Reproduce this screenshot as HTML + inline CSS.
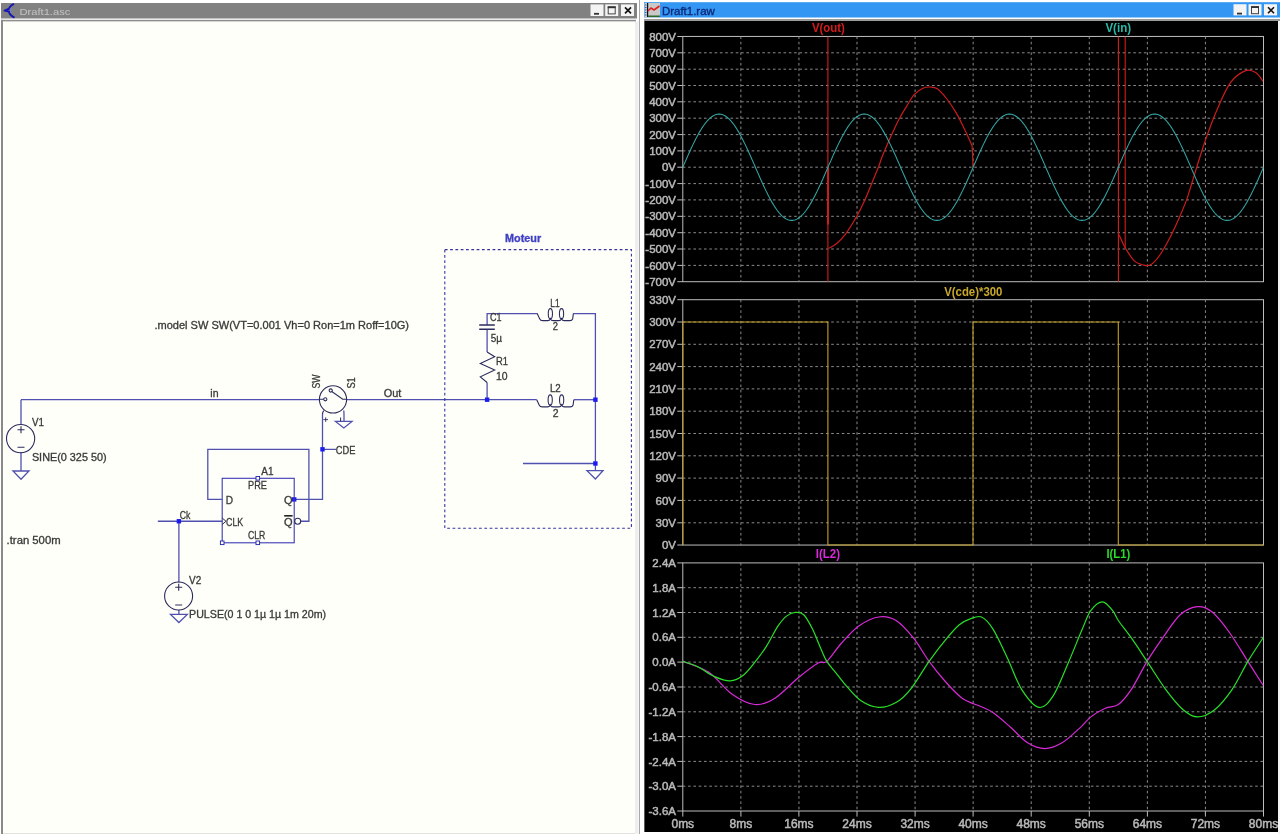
<!DOCTYPE html><html><head><meta charset="utf-8"><style>html,body{margin:0;padding:0;background:#fff;width:1280px;height:834px;overflow:hidden}svg{display:block;filter:blur(0.3px)}text{font-family:"Liberation Sans",sans-serif}</style></head><body>
<svg width="1280" height="834" viewBox="0 0 1280 834">
<rect x="0" y="0" width="1280" height="834" fill="#ffffff"/>
<rect x="1" y="3" width="636" height="15.5" fill="#818181"/>
<rect x="1" y="19.8" width="635" height="1.8" fill="#8e8e8e"/>
<rect x="1" y="19.8" width="2" height="815" fill="#8a8a8a"/>
<rect x="3" y="21.6" width="632" height="811.4" fill="#fffffa"/>
<rect x="635" y="21.6" width="3.5" height="812" fill="#eeeeee"/>
<rect x="3" y="833" width="632" height="1" fill="#e2e2e2"/>
<rect x="639" y="0" width="1" height="834" fill="#a8a8a8"/>
<text x="19.4" y="15.4" font-size="9.8" fill="#c4c4c4" textLength="51" lengthAdjust="spacingAndGlyphs">Draft1.asc</text>
<path d="M14,3.8 Q9.5,6 9,8.8 L4.6,10.6 L9,11.6 Q9.5,15 14.5,17.6" stroke="#1616b4" stroke-width="2" fill="none" stroke-linejoin="round"/>
<path d="M10.5,8 Q10,10.5 11,13" stroke="#7a7aff" stroke-width="0.8" fill="none"/>
<rect x="590.5" y="4.4" width="13" height="11.6" fill="#f4f4f4"/>
<rect x="594.0" y="12.9" width="5" height="1.8" fill="#333"/>
<rect x="605.2" y="4.4" width="13" height="11.6" fill="#f4f4f4"/>
<rect x="608.2" y="6.9" width="7" height="7" fill="none" stroke="#444" stroke-width="1"/>
<rect x="607.7" y="6.4" width="8" height="1.8" fill="#333"/>
<rect x="621" y="4.4" width="13" height="11.6" fill="#f4f4f4"/>
<path d="M625,7.4 L631,13.4 M631,7.4 L625,13.4" stroke="#111" stroke-width="1.6"/>
<g fill="none" stroke="#5050b0" stroke-width="1.3">
<path d="M21,399.7 H319.3 M346.7,399.7 H487.1 H536.7"/>
<path d="M573.8,399.7 H595.4"/>
<path d="M21,399.7 V424.5 M21,452 V471"/>
<path d="M13,471 H29 L21,479.3 Z"/>
<path d="M487.1,325 V313.6 H537.5 M573.4,313.6 H595.4 V463.5 M523,463.5 H595.4 V470.7"/>
<path d="M587,470.7 H603 L595.4,479 Z"/>
<path d="M487.1,329.2 V352 M487.1,382.5 V399.7"/>
<path d="M322.5,413.5 V499.4 H294.2 M322.5,449.3 H336"/>
<path d="M221.9,499.4 H207.8 V449.4 H308.9 V521.25 H300.8"/>
<path d="M157.8,521.25 H222.2 M178.9,521.25 V582.5 M178.9,610 V614.4"/>
<path d="M170.5,614.4 H187.3 L178.9,622.5 Z"/>
<path d="M343.8,410.5 Q344,413 344,415 V421.4 M335.5,421.4 H352 L343.8,428 Z"/>
</g>
<rect x="484.90000000000003" y="397.5" width="4.4" height="4.4" fill="#1c1cf0"/>
<rect x="593.1999999999999" y="397.5" width="4.4" height="4.4" fill="#1c1cf0"/>
<rect x="593.1999999999999" y="461.3" width="4.4" height="4.4" fill="#1c1cf0"/>
<rect x="320.3" y="447.1" width="4.4" height="4.4" fill="#1c1cf0"/>
<rect x="292.0" y="497.2" width="4.4" height="4.4" fill="#1c1cf0"/>
<rect x="176.70000000000002" y="519.05" width="4.4" height="4.4" fill="#1c1cf0"/>
<g fill="none" stroke="#2c2c5c" stroke-width="1.1">
<circle cx="20.6" cy="438.6" r="14.1"/>
<path d="M17.5,429.7 H24.5 M21,426.2 V433.2 M17.5,447.3 H24.5"/>
<circle cx="178.6" cy="596" r="14"/>
<path d="M175.2,587.3 H182.2 M178.7,583.8 V590.8 M175.2,605 H182.2"/>
<circle cx="333" cy="399.4" r="13.6"/>
<circle cx="325.3" cy="399.3" r="1.6"/><circle cx="330.7" cy="390.5" r="1.6"/>
<path d="M319.4,399.3 H323.7 M331.8,391.5 L342.7,399.3 H346.6"/>
<path d="M323.8,410.6 Q322.5,412 322.5,414"/>
<path d="M323.4,419.6 H328 M325.7,417.3 V421.9" stroke-width="0.9"/>
<path d="M340.6,417.5 V421.4" stroke-width="1"/>
<path d="M479.2,325 H494.8 M479.2,329.2 H494.8" stroke-width="1.6"/>
<path d="M487.1,352 L494.7,356.8 L480.3,363.5 L494.7,370 L480.3,376.8 L487.1,382.5"/>
<path d="M537.20,313.4 L539.61,318.7 Q540.52,320.59999999999997 542.53,320.59999999999997 L547.76,320.59999999999997 Q549.67,320.59999999999997 550.37,318.7 Q551.18,320.59999999999997 553.09,320.59999999999997 L558.92,320.59999999999997 Q560.73,320.59999999999997 561.53,318.7 Q562.34,320.59999999999997 564.15,320.59999999999997 L569.98,320.59999999999997 Q571.99,320.59999999999997 572.70,318.7 L573.40,313.4"/>
<ellipse cx="550.37" cy="313.70" rx="2.1" ry="5.1"/>
<ellipse cx="561.53" cy="313.70" rx="2.1" ry="5.1"/>
<path d="M536.70,399.7 L539.17,405.0 Q540.10,406.9 542.16,406.9 L547.52,406.9 Q549.48,406.9 550.20,405.0 Q551.02,406.9 552.98,406.9 L558.96,406.9 Q560.81,406.9 561.64,405.0 Q562.46,406.9 564.32,406.9 L570.30,406.9 Q572.36,406.9 573.08,405.0 L573.80,399.7"/>
<ellipse cx="550.20" cy="400.00" rx="2.1" ry="5.1"/>
<ellipse cx="561.64" cy="400.00" rx="2.1" ry="5.1"/>
<rect x="222.2" y="478.3" width="72" height="64.5" stroke="#3a3ab4"/>
<circle cx="297.7" cy="521.25" r="3"/>
<path d="M222.2,518 L226,521.25 L222.2,524.5" stroke-width="1"/>
</g>
<g fill="#fffffa" stroke="#2020b0" stroke-width="0.9">
<rect x="256.0" y="476.5" width="3.6" height="3.6"/>
<rect x="256.0" y="541.0" width="3.6" height="3.6"/>
<rect x="220.39999999999998" y="541.0" width="3.6" height="3.6"/>
</g>
<rect x="444.8" y="249.6" width="186.6" height="278.6" fill="none" stroke="#34349e" stroke-width="1.1" stroke-dasharray="2.8 2.5"/>
<text x="154.5" y="328.6" font-size="10" fill="#3a3a3a" stroke="#3a3a3a" stroke-width="0.3" textLength="254.5" lengthAdjust="spacingAndGlyphs" >.model SW SW(VT=0.001 Vh=0 Ron=1m Roff=10G)</text>
<text x="210.3" y="397.3" font-size="10" fill="#3a3a3a" stroke="#3a3a3a" stroke-width="0.3" textLength="8.2" lengthAdjust="spacingAndGlyphs" >in</text>
<text x="383.7" y="397.3" font-size="10" fill="#3a3a3a" stroke="#3a3a3a" stroke-width="0.3" textLength="17.6" lengthAdjust="spacingAndGlyphs" >Out</text>
<text x="31.9" y="425.5" font-size="10" fill="#3a3a3a" stroke="#3a3a3a" stroke-width="0.3" textLength="12" lengthAdjust="spacingAndGlyphs" >V1</text>
<text x="31.9" y="461" font-size="10" fill="#3a3a3a" stroke="#3a3a3a" stroke-width="0.3" textLength="74.7" lengthAdjust="spacingAndGlyphs" >SINE(0 325 50)</text>
<text x="335.8" y="453.6" font-size="10" fill="#3a3a3a" stroke="#3a3a3a" stroke-width="0.3" textLength="19.6" lengthAdjust="spacingAndGlyphs" >CDE</text>
<text x="261.3" y="475" font-size="10" fill="#3a3a3a" stroke="#3a3a3a" stroke-width="0.3" textLength="12.2" lengthAdjust="spacingAndGlyphs" >A1</text>
<text x="248" y="489.3" font-size="10" fill="#3a3a3a" stroke="#3a3a3a" stroke-width="0.3" textLength="18.9" lengthAdjust="spacingAndGlyphs" >PRE</text>
<text x="225.8" y="503.7" font-size="10" fill="#3a3a3a" stroke="#3a3a3a" stroke-width="0.3" textLength="7.3" lengthAdjust="spacingAndGlyphs" >D</text>
<text x="284" y="503.7" font-size="10" fill="#3a3a3a" stroke="#3a3a3a" stroke-width="0.3" textLength="8.6" lengthAdjust="spacingAndGlyphs" >Q</text>
<text x="226" y="525.7" font-size="10" fill="#3a3a3a" stroke="#3a3a3a" stroke-width="0.3" textLength="17.2" lengthAdjust="spacingAndGlyphs" >CLK</text>
<text x="284" y="525.7" font-size="10" fill="#3a3a3a" stroke="#3a3a3a" stroke-width="0.3" textLength="8.6" lengthAdjust="spacingAndGlyphs" >Q</text>
<rect x="284.2" y="515" width="8.4" height="1.6" fill="#222"/>
<text x="248" y="538.8" font-size="10" fill="#3a3a3a" stroke="#3a3a3a" stroke-width="0.3" textLength="17.4" lengthAdjust="spacingAndGlyphs" >CLR</text>
<text x="179.7" y="519" font-size="10" fill="#3a3a3a" stroke="#3a3a3a" stroke-width="0.3" textLength="10.6" lengthAdjust="spacingAndGlyphs" >Ck</text>
<text x="6.6" y="543.5" font-size="10" fill="#3a3a3a" stroke="#3a3a3a" stroke-width="0.3" textLength="54" lengthAdjust="spacingAndGlyphs" >.tran 500m</text>
<text x="189.1" y="583.8" font-size="10" fill="#3a3a3a" stroke="#3a3a3a" stroke-width="0.3" textLength="12.2" lengthAdjust="spacingAndGlyphs" >V2</text>
<text x="189.1" y="618.4" font-size="10" fill="#3a3a3a" stroke="#3a3a3a" stroke-width="0.3" textLength="137" lengthAdjust="spacingAndGlyphs" >PULSE(0 1 0 1µ 1µ 1m 20m)</text>
<text x="489.9" y="320.5" font-size="10" fill="#3a3a3a" stroke="#3a3a3a" stroke-width="0.3" textLength="11.5" lengthAdjust="spacingAndGlyphs" >C1</text>
<text x="490.7" y="342.3" font-size="10" fill="#3a3a3a" stroke="#3a3a3a" stroke-width="0.3" textLength="11.3" lengthAdjust="spacingAndGlyphs" >5µ</text>
<text x="495.9" y="364.5" font-size="10" fill="#3a3a3a" stroke="#3a3a3a" stroke-width="0.3" textLength="12" lengthAdjust="spacingAndGlyphs" >R1</text>
<text x="495.9" y="380.3" font-size="10" fill="#3a3a3a" stroke="#3a3a3a" stroke-width="0.3" textLength="11.6" lengthAdjust="spacingAndGlyphs" >10</text>
<text x="550.3" y="306.5" font-size="10" fill="#3a3a3a" stroke="#3a3a3a" stroke-width="0.3" textLength="9.4" lengthAdjust="spacingAndGlyphs" >L1</text>
<text x="552.8" y="329.8" font-size="10" fill="#3a3a3a" stroke="#3a3a3a" stroke-width="0.3" textLength="5.2" lengthAdjust="spacingAndGlyphs" >2</text>
<text x="549.9" y="391.5" font-size="10" fill="#3a3a3a" stroke="#3a3a3a" stroke-width="0.3" textLength="10.8" lengthAdjust="spacingAndGlyphs" >L2</text>
<text x="552.7" y="416.7" font-size="10" fill="#3a3a3a" stroke="#3a3a3a" stroke-width="0.3" textLength="5.8" lengthAdjust="spacingAndGlyphs" >2</text>
<text x="505.1" y="242.4" font-size="10" fill="#4040c4" stroke="#4040c4" stroke-width="0.3" textLength="36.1" lengthAdjust="spacingAndGlyphs" font-weight="bold">Moteur</text>
<text transform="translate(319.6,388.6) rotate(-90)" font-size="10" fill="#3a3a3a" stroke="#3a3a3a" stroke-width="0.3" textLength="14" lengthAdjust="spacingAndGlyphs">SW</text>
<text transform="translate(355,388.6) rotate(-90)" font-size="10" fill="#3a3a3a" stroke="#3a3a3a" stroke-width="0.3" textLength="11.3" lengthAdjust="spacingAndGlyphs">S1</text>
<rect x="644" y="2.2" width="636" height="15.3" fill="#3396f2"/>
<rect x="644" y="19" width="636" height="2" fill="#9a9a9a"/>
<rect x="645" y="21" width="633" height="811" fill="#000000"/>
<rect x="644" y="21" width="1" height="811" fill="#5a5a5a"/>
<rect x="1278" y="21" width="2" height="813" fill="#f4f4f4"/>
<text x="662" y="14.9" font-size="11" fill="#0c2a7a" stroke="#0c2a7a" stroke-width="0.35" textLength="52.8" lengthAdjust="spacingAndGlyphs">Draft1.raw</text>
<rect x="644.5" y="3" width="15.5" height="14.5" fill="#c9c9c9"/>
<rect x="647" y="3" width="1.2" height="14" fill="#111"/>
<path d="M648,11 L651,8 L654,10 L656,8.5 L659.5,6" stroke="#e02020" stroke-width="1.6" fill="none"/>
<path d="M645,5 h1.5 M645,7.5 h1.5 M645,10 h1.5 M645,12.5 h1.5 M645,15 h1.5" stroke="#2a6cd0" stroke-width="1"/>
<rect x="648" y="15.5" width="12" height="1.5" fill="#306a30"/>
<rect x="1233.5" y="4.2" width="13" height="11.2" fill="#f4f4f4"/>
<rect x="1237.0" y="12.7" width="5" height="1.8" fill="#333"/>
<rect x="1248.5" y="4.2" width="13" height="11.2" fill="#f4f4f4"/>
<rect x="1251.5" y="6.7" width="7" height="7" fill="none" stroke="#444" stroke-width="1"/>
<rect x="1251.0" y="6.2" width="8" height="1.8" fill="#333"/>
<rect x="1264" y="4.2" width="13" height="11.2" fill="#f4f4f4"/>
<path d="M1268,7.2 L1274,13.2 M1274,7.2 L1268,13.2" stroke="#111" stroke-width="1.6"/>
<rect x="682.8" y="36.45" width="580.7" height="245.25" fill="none" stroke="#bdbdbd" stroke-width="1"/>
<path d="M740.87,36.45 V281.7 M798.94,36.45 V281.7 M857.01,36.45 V281.7 M915.08,36.45 V281.7 M973.15,36.45 V281.7 M1031.22,36.45 V281.7 M1089.29,36.45 V281.7 M1147.36,36.45 V281.7 M1205.43,36.45 V281.7 " stroke="#8a8a8a" stroke-width="1" stroke-dasharray="2.6 2.7" fill="none"/>
<path d="M682.8,52.8 H1263.5 M682.8,69.2 H1263.5 M682.8,85.5 H1263.5 M682.8,101.8 H1263.5 M682.8,118.2 H1263.5 M682.8,134.6 H1263.5 M682.8,150.9 H1263.5 M682.8,167.2 H1263.5 M682.8,183.6 H1263.5 M682.8,199.9 H1263.5 M682.8,216.3 H1263.5 M682.8,232.7 H1263.5 M682.8,249.0 H1263.5 M682.8,265.4 H1263.5 " stroke="#8a8a8a" stroke-width="1" stroke-dasharray="2.6 2.7" fill="none"/>
<path d="M677.3,36.5 H682.8 M677.3,52.8 H682.8 M677.3,69.2 H682.8 M677.3,85.5 H682.8 M677.3,101.8 H682.8 M677.3,118.2 H682.8 M677.3,134.6 H682.8 M677.3,150.9 H682.8 M677.3,167.2 H682.8 M677.3,183.6 H682.8 M677.3,199.9 H682.8 M677.3,216.3 H682.8 M677.3,232.7 H682.8 M677.3,249.0 H682.8 M677.3,265.4 H682.8 M677.3,281.7 H682.8 " stroke="#bdbdbd" stroke-width="1" fill="none"/>
<text x="676" y="40.6" font-size="11.5" fill="#b8b8b8" stroke="#b8b8b8" stroke-width="0.5" text-anchor="end">800V</text>
<text x="676" y="56.9" font-size="11.5" fill="#b8b8b8" stroke="#b8b8b8" stroke-width="0.5" text-anchor="end">700V</text>
<text x="676" y="73.2" font-size="11.5" fill="#b8b8b8" stroke="#b8b8b8" stroke-width="0.5" text-anchor="end">600V</text>
<text x="676" y="89.6" font-size="11.5" fill="#b8b8b8" stroke="#b8b8b8" stroke-width="0.5" text-anchor="end">500V</text>
<text x="676" y="106.0" font-size="11.5" fill="#b8b8b8" stroke="#b8b8b8" stroke-width="0.5" text-anchor="end">400V</text>
<text x="676" y="122.3" font-size="11.5" fill="#b8b8b8" stroke="#b8b8b8" stroke-width="0.5" text-anchor="end">300V</text>
<text x="676" y="138.7" font-size="11.5" fill="#b8b8b8" stroke="#b8b8b8" stroke-width="0.5" text-anchor="end">200V</text>
<text x="676" y="155.0" font-size="11.5" fill="#b8b8b8" stroke="#b8b8b8" stroke-width="0.5" text-anchor="end">100V</text>
<text x="676" y="171.3" font-size="11.5" fill="#b8b8b8" stroke="#b8b8b8" stroke-width="0.5" text-anchor="end">0V</text>
<text x="676" y="187.7" font-size="11.5" fill="#b8b8b8" stroke="#b8b8b8" stroke-width="0.5" text-anchor="end">-100V</text>
<text x="676" y="204.0" font-size="11.5" fill="#b8b8b8" stroke="#b8b8b8" stroke-width="0.5" text-anchor="end">-200V</text>
<text x="676" y="220.4" font-size="11.5" fill="#b8b8b8" stroke="#b8b8b8" stroke-width="0.5" text-anchor="end">-300V</text>
<text x="676" y="236.7" font-size="11.5" fill="#b8b8b8" stroke="#b8b8b8" stroke-width="0.5" text-anchor="end">-400V</text>
<text x="676" y="253.1" font-size="11.5" fill="#b8b8b8" stroke="#b8b8b8" stroke-width="0.5" text-anchor="end">-500V</text>
<text x="676" y="269.5" font-size="11.5" fill="#b8b8b8" stroke="#b8b8b8" stroke-width="0.5" text-anchor="end">-600V</text>
<text x="676" y="285.8" font-size="11.5" fill="#b8b8b8" stroke="#b8b8b8" stroke-width="0.5" text-anchor="end">-700V</text>
<rect x="682.8" y="299.7" width="580.7" height="245.34999999999997" fill="none" stroke="#bdbdbd" stroke-width="1"/>
<path d="M740.87,299.7 V545.05 M798.94,299.7 V545.05 M857.01,299.7 V545.05 M915.08,299.7 V545.05 M973.15,299.7 V545.05 M1031.22,299.7 V545.05 M1089.29,299.7 V545.05 M1147.36,299.7 V545.05 M1205.43,299.7 V545.05 " stroke="#8a8a8a" stroke-width="1" stroke-dasharray="2.6 2.7" fill="none"/>
<path d="M682.8,322.0 H1263.5 M682.8,344.3 H1263.5 M682.8,366.6 H1263.5 M682.8,388.9 H1263.5 M682.8,411.2 H1263.5 M682.8,433.5 H1263.5 M682.8,455.8 H1263.5 M682.8,478.1 H1263.5 M682.8,500.4 H1263.5 M682.8,522.8 H1263.5 " stroke="#8a8a8a" stroke-width="1" stroke-dasharray="2.6 2.7" fill="none"/>
<path d="M677.3,299.7 H682.8 M677.3,322.0 H682.8 M677.3,344.3 H682.8 M677.3,366.6 H682.8 M677.3,388.9 H682.8 M677.3,411.2 H682.8 M677.3,433.5 H682.8 M677.3,455.8 H682.8 M677.3,478.1 H682.8 M677.3,500.4 H682.8 M677.3,522.8 H682.8 M677.3,545.0 H682.8 " stroke="#bdbdbd" stroke-width="1" fill="none"/>
<text x="676" y="303.8" font-size="11.5" fill="#b8b8b8" stroke="#b8b8b8" stroke-width="0.5" text-anchor="end">330V</text>
<text x="676" y="326.1" font-size="11.5" fill="#b8b8b8" stroke="#b8b8b8" stroke-width="0.5" text-anchor="end">300V</text>
<text x="676" y="348.4" font-size="11.5" fill="#b8b8b8" stroke="#b8b8b8" stroke-width="0.5" text-anchor="end">270V</text>
<text x="676" y="370.7" font-size="11.5" fill="#b8b8b8" stroke="#b8b8b8" stroke-width="0.5" text-anchor="end">240V</text>
<text x="676" y="393.0" font-size="11.5" fill="#b8b8b8" stroke="#b8b8b8" stroke-width="0.5" text-anchor="end">210V</text>
<text x="676" y="415.3" font-size="11.5" fill="#b8b8b8" stroke="#b8b8b8" stroke-width="0.5" text-anchor="end">180V</text>
<text x="676" y="437.6" font-size="11.5" fill="#b8b8b8" stroke="#b8b8b8" stroke-width="0.5" text-anchor="end">150V</text>
<text x="676" y="459.9" font-size="11.5" fill="#b8b8b8" stroke="#b8b8b8" stroke-width="0.5" text-anchor="end">120V</text>
<text x="676" y="482.2" font-size="11.5" fill="#b8b8b8" stroke="#b8b8b8" stroke-width="0.5" text-anchor="end">90V</text>
<text x="676" y="504.5" font-size="11.5" fill="#b8b8b8" stroke="#b8b8b8" stroke-width="0.5" text-anchor="end">60V</text>
<text x="676" y="526.8" font-size="11.5" fill="#b8b8b8" stroke="#b8b8b8" stroke-width="0.5" text-anchor="end">30V</text>
<text x="676" y="549.1" font-size="11.5" fill="#b8b8b8" stroke="#b8b8b8" stroke-width="0.5" text-anchor="end">0V</text>
<rect x="682.8" y="562.9" width="580.7" height="248.10000000000002" fill="none" stroke="#bdbdbd" stroke-width="1"/>
<path d="M740.87,562.9 V811.0 M798.94,562.9 V811.0 M857.01,562.9 V811.0 M915.08,562.9 V811.0 M973.15,562.9 V811.0 M1031.22,562.9 V811.0 M1089.29,562.9 V811.0 M1147.36,562.9 V811.0 M1205.43,562.9 V811.0 " stroke="#8a8a8a" stroke-width="1" stroke-dasharray="2.6 2.7" fill="none"/>
<path d="M682.8,587.7 H1263.5 M682.8,612.5 H1263.5 M682.8,637.3 H1263.5 M682.8,662.1 H1263.5 M682.8,687.0 H1263.5 M682.8,711.8 H1263.5 M682.8,736.6 H1263.5 M682.8,761.4 H1263.5 M682.8,786.2 H1263.5 " stroke="#8a8a8a" stroke-width="1" stroke-dasharray="2.6 2.7" fill="none"/>
<path d="M677.3,562.9 H682.8 M677.3,587.7 H682.8 M677.3,612.5 H682.8 M677.3,637.3 H682.8 M677.3,662.1 H682.8 M677.3,687.0 H682.8 M677.3,711.8 H682.8 M677.3,736.6 H682.8 M677.3,761.4 H682.8 M677.3,786.2 H682.8 M677.3,811.0 H682.8 " stroke="#bdbdbd" stroke-width="1" fill="none"/>
<text x="676" y="567.0" font-size="11.5" fill="#b8b8b8" stroke="#b8b8b8" stroke-width="0.5" text-anchor="end">2.4A</text>
<text x="676" y="591.8" font-size="11.5" fill="#b8b8b8" stroke="#b8b8b8" stroke-width="0.5" text-anchor="end">1.8A</text>
<text x="676" y="616.6" font-size="11.5" fill="#b8b8b8" stroke="#b8b8b8" stroke-width="0.5" text-anchor="end">1.2A</text>
<text x="676" y="641.4" font-size="11.5" fill="#b8b8b8" stroke="#b8b8b8" stroke-width="0.5" text-anchor="end">0.6A</text>
<text x="676" y="666.2" font-size="11.5" fill="#b8b8b8" stroke="#b8b8b8" stroke-width="0.5" text-anchor="end">0.0A</text>
<text x="676" y="691.1" font-size="11.5" fill="#b8b8b8" stroke="#b8b8b8" stroke-width="0.5" text-anchor="end">-0.6A</text>
<text x="676" y="715.9" font-size="11.5" fill="#b8b8b8" stroke="#b8b8b8" stroke-width="0.5" text-anchor="end">-1.2A</text>
<text x="676" y="740.7" font-size="11.5" fill="#b8b8b8" stroke="#b8b8b8" stroke-width="0.5" text-anchor="end">-1.8A</text>
<text x="676" y="765.5" font-size="11.5" fill="#b8b8b8" stroke="#b8b8b8" stroke-width="0.5" text-anchor="end">-2.4A</text>
<text x="676" y="790.3" font-size="11.5" fill="#b8b8b8" stroke="#b8b8b8" stroke-width="0.5" text-anchor="end">-3.0A</text>
<text x="676" y="815.1" font-size="11.5" fill="#b8b8b8" stroke="#b8b8b8" stroke-width="0.5" text-anchor="end">-3.6A</text>
<path d="M682.8,811.0 V816.6 M740.9,811.0 V816.6 M798.9,811.0 V816.6 M857.0,811.0 V816.6 M915.1,811.0 V816.6 M973.1,811.0 V816.6 M1031.2,811.0 V816.6 M1089.3,811.0 V816.6 M1147.4,811.0 V816.6 M1205.4,811.0 V816.6 M1263.5,811.0 V816.6 " stroke="#bdbdbd" stroke-width="1" fill="none"/>
<text x="682.8" y="827.6" font-size="12" fill="#b8b8b8" stroke="#b8b8b8" stroke-width="0.5" text-anchor="middle">0ms</text>
<text x="740.9" y="827.6" font-size="12" fill="#b8b8b8" stroke="#b8b8b8" stroke-width="0.5" text-anchor="middle">8ms</text>
<text x="798.9" y="827.6" font-size="12" fill="#b8b8b8" stroke="#b8b8b8" stroke-width="0.5" text-anchor="middle">16ms</text>
<text x="857.0" y="827.6" font-size="12" fill="#b8b8b8" stroke="#b8b8b8" stroke-width="0.5" text-anchor="middle">24ms</text>
<text x="915.1" y="827.6" font-size="12" fill="#b8b8b8" stroke="#b8b8b8" stroke-width="0.5" text-anchor="middle">32ms</text>
<text x="973.1" y="827.6" font-size="12" fill="#b8b8b8" stroke="#b8b8b8" stroke-width="0.5" text-anchor="middle">40ms</text>
<text x="1031.2" y="827.6" font-size="12" fill="#b8b8b8" stroke="#b8b8b8" stroke-width="0.5" text-anchor="middle">48ms</text>
<text x="1089.3" y="827.6" font-size="12" fill="#b8b8b8" stroke="#b8b8b8" stroke-width="0.5" text-anchor="middle">56ms</text>
<text x="1147.4" y="827.6" font-size="12" fill="#b8b8b8" stroke="#b8b8b8" stroke-width="0.5" text-anchor="middle">64ms</text>
<text x="1205.4" y="827.6" font-size="12" fill="#b8b8b8" stroke="#b8b8b8" stroke-width="0.5" text-anchor="middle">72ms</text>
<text x="1263.5" y="827.6" font-size="12" fill="#b8b8b8" stroke="#b8b8b8" stroke-width="0.5" text-anchor="middle">80ms</text>
<g clip-path="url(#clip1)">
<clipPath id="clip1"><rect x="682.8" y="36.45" width="580.7" height="245.25"/></clipPath>
<path d="M827.9,36.45 V281.7 M1118.4,36.45 V281.7 M1125.2,36.45 V248" stroke="#cc1c1c" stroke-width="1.15" fill="none"/>
<path d="M828,167.2 V224.5" stroke="#cc1c1c" stroke-width="2" fill="none"/>
<path d="M829.00,248.30 C830.23,247.55 833.65,246.17 836.40,243.80 C839.15,241.43 842.18,238.57 845.50,234.10 C848.82,229.63 853.07,222.70 856.30,217.00 C859.53,211.30 862.33,205.50 864.90,199.90 C867.47,194.30 869.42,188.92 871.70,183.40 C873.98,177.88 876.85,171.28 878.60,166.80 C880.35,162.32 880.40,161.02 882.20,156.50 C884.00,151.98 886.60,145.90 889.40,139.70 C892.20,133.50 896.00,125.08 899.00,119.30 C902.00,113.52 904.80,109.18 907.40,105.00 C910.00,100.82 912.00,97.00 914.60,94.20 C917.20,91.40 920.42,89.40 923.00,88.20 C925.58,87.00 927.72,86.90 930.10,87.00 C932.48,87.10 934.50,86.80 937.30,88.80 C940.10,90.80 943.70,94.90 946.90,99.00 C950.10,103.10 953.50,108.22 956.50,113.40 C959.50,118.58 962.30,124.72 964.90,130.10 C967.50,135.48 970.90,143.10 972.10,145.70 L973,163.7 L973,167.2" stroke="#cc1c1c" stroke-width="1.2" fill="none"/>
<path d="M1119.00,234.70 C1120.05,236.88 1122.73,243.43 1125.30,247.80 C1127.87,252.17 1131.18,257.97 1134.40,260.90 C1137.62,263.83 1141.75,264.83 1144.60,265.40 C1147.45,265.97 1148.83,266.20 1151.50,264.30 C1154.17,262.40 1157.57,258.37 1160.60,254.00 C1163.63,249.63 1166.67,243.98 1169.70,238.10 C1172.73,232.22 1175.95,225.15 1178.80,218.70 C1181.65,212.25 1184.47,205.85 1186.80,199.40 C1189.13,192.95 1189.72,189.82 1192.80,180.00 C1195.88,170.18 1201.12,152.53 1205.30,140.50 C1209.48,128.47 1213.70,117.45 1217.90,107.80 C1222.10,98.15 1225.88,88.80 1230.50,82.60 C1235.12,76.40 1241.40,72.27 1245.60,70.60 C1249.80,68.93 1252.77,70.80 1255.70,72.60 C1258.63,74.40 1261.95,79.93 1263.20,81.40" stroke="#cc1c1c" stroke-width="1.2" fill="none"/>
<path d="M682.80,167.25 L683.53,165.58 L684.25,163.91 L684.98,162.25 L685.70,160.59 L686.43,158.94 L687.16,157.29 L687.88,155.66 L688.61,154.04 L689.33,152.43 L690.06,150.83 L690.78,149.25 L691.51,147.69 L692.24,146.15 L692.96,144.63 L693.69,143.13 L694.41,141.65 L695.14,140.20 L695.87,138.78 L696.59,137.38 L697.32,136.02 L698.04,134.68 L698.77,133.38 L699.50,132.11 L700.22,130.87 L700.95,129.68 L701.67,128.51 L702.40,127.39 L703.12,126.31 L703.85,125.26 L704.58,124.26 L705.30,123.30 L706.03,122.38 L706.75,121.51 L707.48,120.69 L708.21,119.90 L708.93,119.17 L709.66,118.48 L710.38,117.84 L711.11,117.25 L711.83,116.71 L712.56,116.22 L713.29,115.78 L714.01,115.39 L714.74,115.05 L715.46,114.77 L716.19,114.53 L716.92,114.35 L717.64,114.22 L718.37,114.14 L719.09,114.11 L719.82,114.14 L720.55,114.22 L721.27,114.35 L722.00,114.53 L722.72,114.77 L723.45,115.05 L724.17,115.39 L724.90,115.78 L725.63,116.22 L726.35,116.71 L727.08,117.25 L727.80,117.84 L728.53,118.48 L729.26,119.17 L729.98,119.90 L730.71,120.69 L731.43,121.51 L732.16,122.38 L732.89,123.30 L733.61,124.26 L734.34,125.26 L735.06,126.31 L735.79,127.39 L736.51,128.51 L737.24,129.68 L737.97,130.87 L738.69,132.11 L739.42,133.38 L740.14,134.68 L740.87,136.02 L741.60,137.38 L742.32,138.78 L743.05,140.20 L743.77,141.65 L744.50,143.13 L745.23,144.63 L745.95,146.15 L746.68,147.69 L747.40,149.25 L748.13,150.83 L748.85,152.43 L749.58,154.04 L750.31,155.66 L751.03,157.29 L751.76,158.94 L752.48,160.59 L753.21,162.25 L753.94,163.91 L754.66,165.58 L755.39,167.25 L756.11,168.92 L756.84,170.59 L757.57,172.25 L758.29,173.91 L759.02,175.56 L759.74,177.21 L760.47,178.84 L761.19,180.46 L761.92,182.07 L762.65,183.67 L763.37,185.25 L764.10,186.81 L764.82,188.35 L765.55,189.87 L766.28,191.37 L767.00,192.85 L767.73,194.30 L768.45,195.72 L769.18,197.12 L769.90,198.48 L770.63,199.82 L771.36,201.12 L772.08,202.39 L772.81,203.63 L773.53,204.82 L774.26,205.99 L774.99,207.11 L775.71,208.19 L776.44,209.24 L777.16,210.24 L777.89,211.20 L778.62,212.12 L779.34,212.99 L780.07,213.81 L780.79,214.60 L781.52,215.33 L782.24,216.02 L782.97,216.66 L783.70,217.25 L784.42,217.79 L785.15,218.28 L785.87,218.72 L786.60,219.11 L787.33,219.45 L788.05,219.73 L788.78,219.97 L789.50,220.15 L790.23,220.28 L790.96,220.36 L791.68,220.39 L792.41,220.36 L793.13,220.28 L793.86,220.15 L794.58,219.97 L795.31,219.73 L796.04,219.45 L796.76,219.11 L797.49,218.72 L798.21,218.28 L798.94,217.79 L799.67,217.25 L800.39,216.66 L801.12,216.02 L801.84,215.33 L802.57,214.60 L803.30,213.81 L804.02,212.99 L804.75,212.12 L805.47,211.20 L806.20,210.24 L806.92,209.24 L807.65,208.19 L808.38,207.11 L809.10,205.99 L809.83,204.82 L810.55,203.63 L811.28,202.39 L812.01,201.12 L812.73,199.82 L813.46,198.48 L814.18,197.12 L814.91,195.72 L815.64,194.30 L816.36,192.85 L817.09,191.37 L817.81,189.87 L818.54,188.35 L819.26,186.81 L819.99,185.25 L820.72,183.67 L821.44,182.07 L822.17,180.46 L822.89,178.84 L823.62,177.21 L824.35,175.56 L825.07,173.91 L825.80,172.25 L826.52,170.59 L827.25,168.92 L827.97,167.25 L828.70,165.58 L829.43,163.91 L830.15,162.25 L830.88,160.59 L831.60,158.94 L832.33,157.29 L833.06,155.66 L833.78,154.04 L834.51,152.43 L835.23,150.83 L835.96,149.25 L836.69,147.69 L837.41,146.15 L838.14,144.63 L838.86,143.13 L839.59,141.65 L840.31,140.20 L841.04,138.78 L841.77,137.38 L842.49,136.02 L843.22,134.68 L843.94,133.38 L844.67,132.11 L845.40,130.87 L846.12,129.68 L846.85,128.51 L847.57,127.39 L848.30,126.31 L849.03,125.26 L849.75,124.26 L850.48,123.30 L851.20,122.38 L851.93,121.51 L852.65,120.69 L853.38,119.90 L854.11,119.17 L854.83,118.48 L855.56,117.84 L856.28,117.25 L857.01,116.71 L857.74,116.22 L858.46,115.78 L859.19,115.39 L859.91,115.05 L860.64,114.77 L861.37,114.53 L862.09,114.35 L862.82,114.22 L863.54,114.14 L864.27,114.11 L864.99,114.14 L865.72,114.22 L866.45,114.35 L867.17,114.53 L867.90,114.77 L868.62,115.05 L869.35,115.39 L870.08,115.78 L870.80,116.22 L871.53,116.71 L872.25,117.25 L872.98,117.84 L873.71,118.48 L874.43,119.17 L875.16,119.90 L875.88,120.69 L876.61,121.51 L877.33,122.38 L878.06,123.30 L878.79,124.26 L879.51,125.26 L880.24,126.31 L880.96,127.39 L881.69,128.51 L882.42,129.68 L883.14,130.87 L883.87,132.11 L884.59,133.38 L885.32,134.68 L886.04,136.02 L886.77,137.38 L887.50,138.78 L888.22,140.20 L888.95,141.65 L889.67,143.13 L890.40,144.63 L891.13,146.15 L891.85,147.69 L892.58,149.25 L893.30,150.83 L894.03,152.43 L894.76,154.04 L895.48,155.66 L896.21,157.29 L896.93,158.94 L897.66,160.59 L898.38,162.25 L899.11,163.91 L899.84,165.58 L900.56,167.25 L901.29,168.92 L902.01,170.59 L902.74,172.25 L903.47,173.91 L904.19,175.56 L904.92,177.21 L905.64,178.84 L906.37,180.46 L907.10,182.07 L907.82,183.67 L908.55,185.25 L909.27,186.81 L910.00,188.35 L910.72,189.87 L911.45,191.37 L912.18,192.85 L912.90,194.30 L913.63,195.72 L914.35,197.12 L915.08,198.48 L915.81,199.82 L916.53,201.12 L917.26,202.39 L917.98,203.63 L918.71,204.82 L919.44,205.99 L920.16,207.11 L920.89,208.19 L921.61,209.24 L922.34,210.24 L923.06,211.20 L923.79,212.12 L924.52,212.99 L925.24,213.81 L925.97,214.60 L926.69,215.33 L927.42,216.02 L928.15,216.66 L928.87,217.25 L929.60,217.79 L930.32,218.28 L931.05,218.72 L931.78,219.11 L932.50,219.45 L933.23,219.73 L933.95,219.97 L934.68,220.15 L935.40,220.28 L936.13,220.36 L936.86,220.39 L937.58,220.36 L938.31,220.28 L939.03,220.15 L939.76,219.97 L940.49,219.73 L941.21,219.45 L941.94,219.11 L942.66,218.72 L943.39,218.28 L944.12,217.79 L944.84,217.25 L945.57,216.66 L946.29,216.02 L947.02,215.33 L947.74,214.60 L948.47,213.81 L949.20,212.99 L949.92,212.12 L950.65,211.20 L951.37,210.24 L952.10,209.24 L952.83,208.19 L953.55,207.11 L954.28,205.99 L955.00,204.82 L955.73,203.63 L956.45,202.39 L957.18,201.12 L957.91,199.82 L958.63,198.48 L959.36,197.12 L960.08,195.72 L960.81,194.30 L961.54,192.85 L962.26,191.37 L962.99,189.87 L963.71,188.35 L964.44,186.81 L965.17,185.25 L965.89,183.67 L966.62,182.07 L967.34,180.46 L968.07,178.84 L968.79,177.21 L969.52,175.56 L970.25,173.91 L970.97,172.25 L971.70,170.59 L972.42,168.92 L973.15,167.25 L973.88,165.58 L974.60,163.91 L975.33,162.25 L976.05,160.59 L976.78,158.94 L977.51,157.29 L978.23,155.66 L978.96,154.04 L979.68,152.43 L980.41,150.83 L981.13,149.25 L981.86,147.69 L982.59,146.15 L983.31,144.63 L984.04,143.13 L984.76,141.65 L985.49,140.20 L986.22,138.78 L986.94,137.38 L987.67,136.02 L988.39,134.68 L989.12,133.38 L989.85,132.11 L990.57,130.87 L991.30,129.68 L992.02,128.51 L992.75,127.39 L993.47,126.31 L994.20,125.26 L994.93,124.26 L995.65,123.30 L996.38,122.38 L997.10,121.51 L997.83,120.69 L998.56,119.90 L999.28,119.17 L1000.01,118.48 L1000.73,117.84 L1001.46,117.25 L1002.18,116.71 L1002.91,116.22 L1003.64,115.78 L1004.36,115.39 L1005.09,115.05 L1005.81,114.77 L1006.54,114.53 L1007.27,114.35 L1007.99,114.22 L1008.72,114.14 L1009.44,114.11 L1010.17,114.14 L1010.90,114.22 L1011.62,114.35 L1012.35,114.53 L1013.07,114.77 L1013.80,115.05 L1014.52,115.39 L1015.25,115.78 L1015.98,116.22 L1016.70,116.71 L1017.43,117.25 L1018.15,117.84 L1018.88,118.48 L1019.61,119.17 L1020.33,119.90 L1021.06,120.69 L1021.78,121.51 L1022.51,122.38 L1023.24,123.30 L1023.96,124.26 L1024.69,125.26 L1025.41,126.31 L1026.14,127.39 L1026.86,128.51 L1027.59,129.68 L1028.32,130.87 L1029.04,132.11 L1029.77,133.38 L1030.49,134.68 L1031.22,136.02 L1031.95,137.38 L1032.67,138.78 L1033.40,140.20 L1034.12,141.65 L1034.85,143.13 L1035.58,144.63 L1036.30,146.15 L1037.03,147.69 L1037.75,149.25 L1038.48,150.83 L1039.20,152.43 L1039.93,154.04 L1040.66,155.66 L1041.38,157.29 L1042.11,158.94 L1042.83,160.59 L1043.56,162.25 L1044.29,163.91 L1045.01,165.58 L1045.74,167.25 L1046.46,168.92 L1047.19,170.59 L1047.92,172.25 L1048.64,173.91 L1049.37,175.56 L1050.09,177.21 L1050.82,178.84 L1051.54,180.46 L1052.27,182.07 L1053.00,183.67 L1053.72,185.25 L1054.45,186.81 L1055.17,188.35 L1055.90,189.87 L1056.63,191.37 L1057.35,192.85 L1058.08,194.30 L1058.80,195.72 L1059.53,197.12 L1060.26,198.48 L1060.98,199.82 L1061.71,201.12 L1062.43,202.39 L1063.16,203.63 L1063.88,204.82 L1064.61,205.99 L1065.34,207.11 L1066.06,208.19 L1066.79,209.24 L1067.51,210.24 L1068.24,211.20 L1068.97,212.12 L1069.69,212.99 L1070.42,213.81 L1071.14,214.60 L1071.87,215.33 L1072.59,216.02 L1073.32,216.66 L1074.05,217.25 L1074.77,217.79 L1075.50,218.28 L1076.22,218.72 L1076.95,219.11 L1077.68,219.45 L1078.40,219.73 L1079.13,219.97 L1079.85,220.15 L1080.58,220.28 L1081.31,220.36 L1082.03,220.39 L1082.76,220.36 L1083.48,220.28 L1084.21,220.15 L1084.93,219.97 L1085.66,219.73 L1086.39,219.45 L1087.11,219.11 L1087.84,218.72 L1088.56,218.28 L1089.29,217.79 L1090.02,217.25 L1090.74,216.66 L1091.47,216.02 L1092.19,215.33 L1092.92,214.60 L1093.65,213.81 L1094.37,212.99 L1095.10,212.12 L1095.82,211.20 L1096.55,210.24 L1097.27,209.24 L1098.00,208.19 L1098.73,207.11 L1099.45,205.99 L1100.18,204.82 L1100.90,203.63 L1101.63,202.39 L1102.36,201.12 L1103.08,199.82 L1103.81,198.48 L1104.53,197.12 L1105.26,195.72 L1105.99,194.30 L1106.71,192.85 L1107.44,191.37 L1108.16,189.87 L1108.89,188.35 L1109.61,186.81 L1110.34,185.25 L1111.07,183.67 L1111.79,182.07 L1112.52,180.46 L1113.24,178.84 L1113.97,177.21 L1114.70,175.56 L1115.42,173.91 L1116.15,172.25 L1116.87,170.59 L1117.60,168.92 L1118.32,167.25 L1119.05,165.58 L1119.78,163.91 L1120.50,162.25 L1121.23,160.59 L1121.95,158.94 L1122.68,157.29 L1123.41,155.66 L1124.13,154.04 L1124.86,152.43 L1125.58,150.83 L1126.31,149.25 L1127.04,147.69 L1127.76,146.15 L1128.49,144.63 L1129.21,143.13 L1129.94,141.65 L1130.66,140.20 L1131.39,138.78 L1132.12,137.38 L1132.84,136.02 L1133.57,134.68 L1134.29,133.38 L1135.02,132.11 L1135.75,130.87 L1136.47,129.68 L1137.20,128.51 L1137.92,127.39 L1138.65,126.31 L1139.38,125.26 L1140.10,124.26 L1140.83,123.30 L1141.55,122.38 L1142.28,121.51 L1143.00,120.69 L1143.73,119.90 L1144.46,119.17 L1145.18,118.48 L1145.91,117.84 L1146.63,117.25 L1147.36,116.71 L1148.09,116.22 L1148.81,115.78 L1149.54,115.39 L1150.26,115.05 L1150.99,114.77 L1151.72,114.53 L1152.44,114.35 L1153.17,114.22 L1153.89,114.14 L1154.62,114.11 L1155.34,114.14 L1156.07,114.22 L1156.80,114.35 L1157.52,114.53 L1158.25,114.77 L1158.97,115.05 L1159.70,115.39 L1160.43,115.78 L1161.15,116.22 L1161.88,116.71 L1162.60,117.25 L1163.33,117.84 L1164.06,118.48 L1164.78,119.17 L1165.51,119.90 L1166.23,120.69 L1166.96,121.51 L1167.68,122.38 L1168.41,123.30 L1169.14,124.26 L1169.86,125.26 L1170.59,126.31 L1171.31,127.39 L1172.04,128.51 L1172.77,129.68 L1173.49,130.87 L1174.22,132.11 L1174.94,133.38 L1175.67,134.68 L1176.39,136.02 L1177.12,137.38 L1177.85,138.78 L1178.57,140.20 L1179.30,141.65 L1180.02,143.13 L1180.75,144.63 L1181.48,146.15 L1182.20,147.69 L1182.93,149.25 L1183.65,150.83 L1184.38,152.43 L1185.11,154.04 L1185.83,155.66 L1186.56,157.29 L1187.28,158.94 L1188.01,160.59 L1188.73,162.25 L1189.46,163.91 L1190.19,165.58 L1190.91,167.25 L1191.64,168.92 L1192.36,170.59 L1193.09,172.25 L1193.82,173.91 L1194.54,175.56 L1195.27,177.21 L1195.99,178.84 L1196.72,180.46 L1197.45,182.07 L1198.17,183.67 L1198.90,185.25 L1199.62,186.81 L1200.35,188.35 L1201.07,189.87 L1201.80,191.37 L1202.53,192.85 L1203.25,194.30 L1203.98,195.72 L1204.70,197.12 L1205.43,198.48 L1206.16,199.82 L1206.88,201.12 L1207.61,202.39 L1208.33,203.63 L1209.06,204.82 L1209.79,205.99 L1210.51,207.11 L1211.24,208.19 L1211.96,209.24 L1212.69,210.24 L1213.41,211.20 L1214.14,212.12 L1214.87,212.99 L1215.59,213.81 L1216.32,214.60 L1217.04,215.33 L1217.77,216.02 L1218.50,216.66 L1219.22,217.25 L1219.95,217.79 L1220.67,218.28 L1221.40,218.72 L1222.13,219.11 L1222.85,219.45 L1223.58,219.73 L1224.30,219.97 L1225.03,220.15 L1225.75,220.28 L1226.48,220.36 L1227.21,220.39 L1227.93,220.36 L1228.66,220.28 L1229.38,220.15 L1230.11,219.97 L1230.84,219.73 L1231.56,219.45 L1232.29,219.11 L1233.01,218.72 L1233.74,218.28 L1234.47,217.79 L1235.19,217.25 L1235.92,216.66 L1236.64,216.02 L1237.37,215.33 L1238.09,214.60 L1238.82,213.81 L1239.55,212.99 L1240.27,212.12 L1241.00,211.20 L1241.72,210.24 L1242.45,209.24 L1243.18,208.19 L1243.90,207.11 L1244.63,205.99 L1245.35,204.82 L1246.08,203.63 L1246.80,202.39 L1247.53,201.12 L1248.26,199.82 L1248.98,198.48 L1249.71,197.12 L1250.43,195.72 L1251.16,194.30 L1251.89,192.85 L1252.61,191.37 L1253.34,189.87 L1254.06,188.35 L1254.79,186.81 L1255.52,185.25 L1256.24,183.67 L1256.97,182.07 L1257.69,180.46 L1258.42,178.84 L1259.14,177.21 L1259.87,175.56 L1260.60,173.91 L1261.32,172.25 L1262.05,170.59 L1262.77,168.92 L1263.50,167.25" stroke="#34a8a6" stroke-width="1.05" fill="none"/>
</g>
<path d="M682.8,545.05 V322.0 H827.9 V545.05 H973 V322.0 H1118.3 V545.05 H1263.5" stroke="#c4a228" stroke-width="1.1" fill="none"/>
<path d="M682.90,661.40 C687.22,663.22 700.65,666.88 708.80,672.30 C716.95,677.72 724.12,688.53 731.80,693.90 C739.48,699.27 747.70,703.78 754.90,704.50 C762.10,705.22 767.82,702.62 775.00,698.20 C782.18,693.78 790.80,683.85 798.00,678.00 C805.20,672.15 813.40,665.87 818.20,663.10 C823.00,660.33 822.97,664.67 826.80,661.40 C830.63,658.13 835.92,649.37 841.20,643.50 C846.48,637.63 852.25,630.62 858.50,626.20 C864.75,621.78 872.45,617.95 878.70,617.00 C884.95,616.05 890.25,617.05 896.00,620.50 C901.75,623.95 907.68,630.88 913.20,637.70 C918.72,644.52 923.82,654.18 929.10,661.40 C934.38,668.62 939.38,674.87 944.90,681.00 C950.42,687.13 956.10,693.90 962.20,698.20 C968.30,702.50 976.37,704.40 981.50,706.80 C986.63,709.20 988.20,709.23 993.00,712.60 C997.80,715.97 1004.53,721.97 1010.30,727.00 C1016.07,732.03 1021.83,739.20 1027.60,742.80 C1033.37,746.40 1039.15,748.60 1044.90,748.60 C1050.65,748.60 1056.35,746.17 1062.10,742.80 C1067.85,739.43 1074.60,732.72 1079.40,728.40 C1084.20,724.08 1086.58,720.25 1090.90,716.90 C1095.22,713.55 1100.73,710.37 1105.30,708.30 C1109.87,706.23 1113.98,707.62 1118.30,704.50 C1122.62,701.38 1126.40,696.78 1131.20,689.60 C1136.00,682.42 1141.82,670.05 1147.10,661.40 C1152.38,652.75 1157.38,645.48 1162.90,637.70 C1168.42,629.92 1174.43,619.88 1180.20,614.70 C1185.97,609.52 1192.22,607.08 1197.50,606.60 C1202.78,606.12 1206.63,607.57 1211.90,611.80 C1217.17,616.03 1223.10,623.73 1229.10,632.00 C1235.10,640.27 1242.23,652.52 1247.90,661.40 C1253.57,670.28 1260.57,681.32 1263.10,685.30" stroke="#d82ad8" stroke-width="1.2" fill="none"/>
<path d="M682.90,661.40 C685.30,662.25 692.02,663.97 697.30,666.50 C702.58,669.03 709.08,674.20 714.60,676.60 C720.12,679.00 725.62,681.13 730.40,680.90 C735.18,680.67 739.22,678.32 743.30,675.20 C747.38,672.08 751.05,667.00 754.90,662.20 C758.75,657.40 762.57,652.40 766.40,646.40 C770.23,640.40 774.55,631.25 777.90,626.20 C781.25,621.15 783.62,618.40 786.50,616.10 C789.38,613.80 792.32,612.63 795.20,612.40 C798.08,612.17 800.92,611.92 803.80,614.70 C806.68,617.48 809.62,623.33 812.50,629.10 C815.38,634.87 818.72,643.92 821.10,649.30 C823.48,654.68 824.40,657.57 826.80,661.40 C829.20,665.23 832.13,668.08 835.50,672.30 C838.87,676.52 842.68,681.90 847.00,686.70 C851.32,691.50 856.12,697.65 861.40,701.10 C866.68,704.55 872.93,707.17 878.70,707.40 C884.47,707.63 890.73,705.47 896.00,702.50 C901.27,699.53 904.78,696.45 910.30,689.60 C915.82,682.75 923.33,669.57 929.10,661.40 C934.87,653.23 939.87,646.70 944.90,640.60 C949.93,634.50 955.12,628.40 959.30,624.80 C963.48,621.20 966.30,620.30 970.00,619.00 C973.70,617.70 977.67,615.32 981.50,617.00 C985.33,618.68 988.68,622.28 993.00,629.10 C997.32,635.92 1002.60,647.82 1007.40,657.90 C1012.20,667.98 1016.52,681.35 1021.80,689.60 C1027.08,697.85 1033.82,706.45 1039.10,707.40 C1044.38,708.35 1048.70,702.58 1053.50,695.30 C1058.30,688.02 1063.10,674.73 1067.90,663.70 C1072.70,652.67 1078.47,637.98 1082.30,629.10 C1086.13,620.22 1087.53,614.95 1090.90,610.40 C1094.27,605.85 1098.90,601.80 1102.50,601.80 C1106.10,601.80 1109.87,607.28 1112.50,610.40 C1115.13,613.52 1115.18,615.95 1118.30,620.50 C1121.42,625.05 1126.40,630.88 1131.20,637.70 C1136.00,644.52 1141.33,652.75 1147.10,661.40 C1152.87,670.05 1159.80,681.55 1165.80,689.60 C1171.80,697.65 1177.82,705.15 1183.10,709.70 C1188.38,714.25 1192.23,716.90 1197.50,716.90 C1202.77,716.90 1208.95,714.25 1214.70,709.70 C1220.45,705.15 1226.47,697.65 1232.00,689.60 C1237.53,681.55 1242.72,670.05 1247.90,661.40 C1253.08,652.75 1260.57,641.65 1263.10,637.70" stroke="#28e028" stroke-width="1.2" fill="none"/>
<text x="811.9" y="32" font-size="12" font-weight="bold" fill="#d41c1c" textLength="33" lengthAdjust="spacingAndGlyphs">V(out)</text>
<text x="1105.4" y="32" font-size="12" font-weight="bold" fill="#2ab8a8" textLength="25.7" lengthAdjust="spacingAndGlyphs">V(in)</text>
<text x="944.2" y="296" font-size="12" font-weight="bold" fill="#c8a82c" textLength="58.2" lengthAdjust="spacingAndGlyphs">V(cde)*300</text>
<text x="815.8" y="557.8" font-size="12" font-weight="bold" fill="#d82ad8" textLength="24.2" lengthAdjust="spacingAndGlyphs">I(L2)</text>
<text x="1106.4" y="557.8" font-size="12" font-weight="bold" fill="#28dc28" textLength="23.8" lengthAdjust="spacingAndGlyphs">I(L1)</text>
</svg></body></html>
